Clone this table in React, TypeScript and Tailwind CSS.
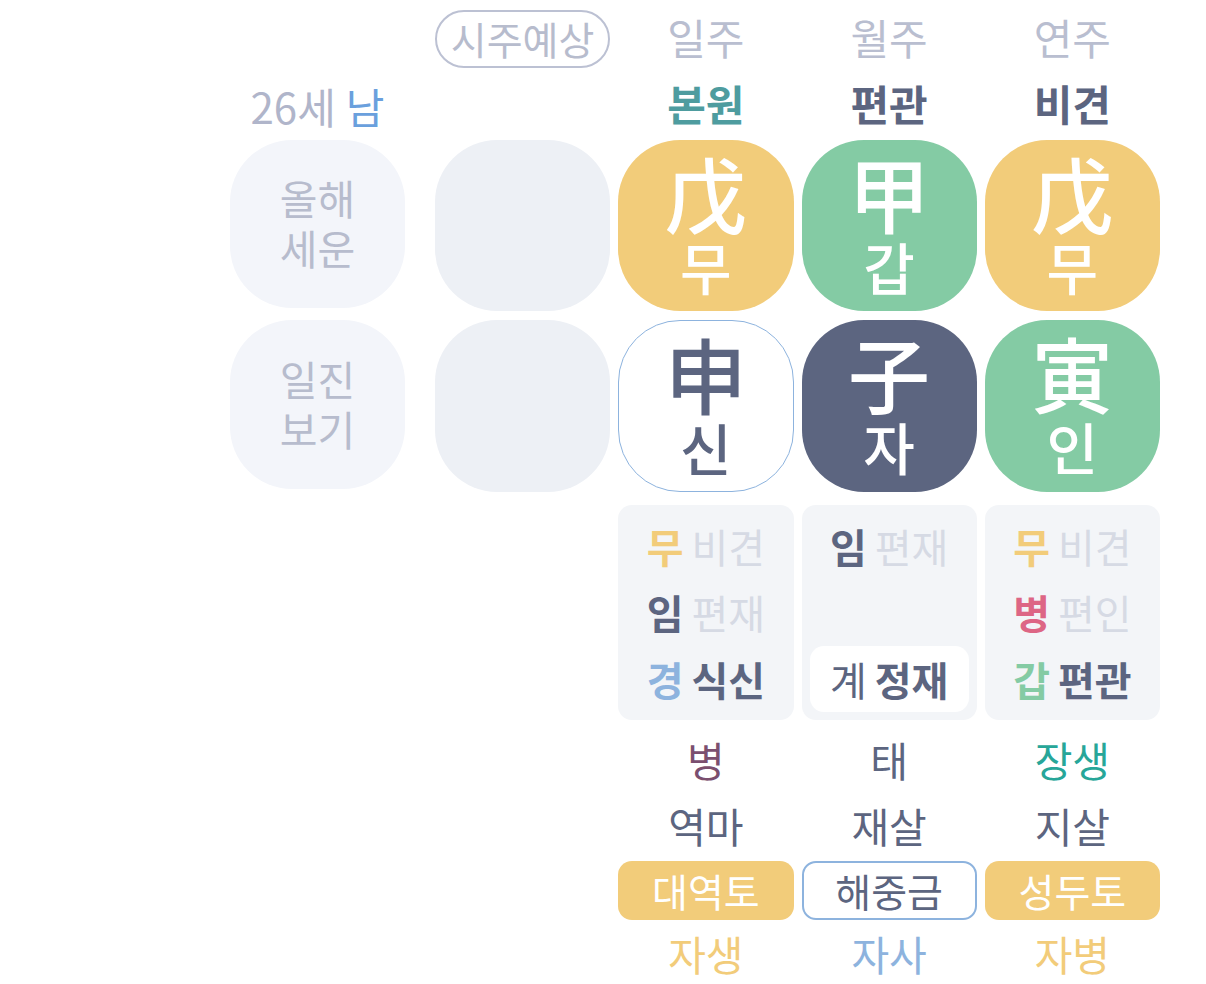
import React from 'react';

const FONT = "'Noto Sans CJK KR', 'Noto Sans', sans-serif";

const pillars = [
  { head: '일주', god: '본원', godClass: 'text-[#4e9c9f]' },
  { head: '월주', god: '편관', godClass: 'text-[#5c6580]' },
  { head: '연주', god: '비견', godClass: 'text-[#5c6580]' },
];

const stems = [
  { han: '戊', kor: '무', box: 'bg-[#f2cc7a] text-white' },
  { han: '甲', kor: '갑', box: 'bg-[#84cba4] text-white' },
  { han: '戊', kor: '무', box: 'bg-[#f2cc7a] text-white' },
];

const branches = [
  { han: '申', kor: '신', box: 'bg-white text-[#5c6580] border-[1.5px] border-[#8db3de]' },
  { han: '子', kor: '자', box: 'bg-[#5c6580] text-white' },
  { han: '寅', kor: '인', box: 'bg-[#84cba4] text-white' },
];

type Hidden = { stem: string; stemClass: string; god: string; strong?: boolean; pill?: boolean } | null;

const hidden: Hidden[][] = [
  [
    { stem: '무', stemClass: 'text-[#f2cc7a]', god: '비견' },
    { stem: '임', stemClass: 'text-[#5c6580]', god: '편재' },
    { stem: '경', stemClass: 'text-[#8db3de]', god: '식신', strong: true },
  ],
  [
    { stem: '임', stemClass: 'text-[#5c6580]', god: '편재' },
    null,
    { stem: '계', stemClass: 'text-[#5c6580] !font-normal', god: '정재', strong: true, pill: true },
  ],
  [
    { stem: '무', stemClass: 'text-[#f2cc7a]', god: '비견' },
    { stem: '병', stemClass: 'text-[#dd6685]', god: '편인' },
    { stem: '갑', stemClass: 'text-[#84cba4]', god: '편관', strong: true },
  ],
];

const unseong = [
  { text: '병', cls: 'text-[#7b4f6f]' },
  { text: '태', cls: 'text-[#5c6580]' },
  { text: '장생', cls: 'text-[#27a699]' },
];

const sinsal = ['역마', '재살', '지살'];

const napeum = [
  { text: '대역토', cls: 'bg-[#f2cc7a] text-white' },
  { text: '해중금', cls: 'bg-white text-[#5c6580] border-2 border-[#8db3de]' },
  { text: '성두토', cls: 'bg-[#f2cc7a] text-white' },
];

const bottom = [
  { text: '자생', cls: 'text-[#f2cc7a]' },
  { text: '자사', cls: 'text-[#8db3de]' },
  { text: '자병', cls: 'text-[#f2cc7a]' },
];

const Row = ({ label, children, className }: { label?: React.ReactNode; children: React.ReactNode; className: string }) => (
  <div className={`flex ${className}`}>
    <div className="w-[175px] mr-[30px] h-full flex-shrink-0">{label}</div>
    <div className="w-[725px] h-full grid grid-cols-4 grid-rows-1 gap-2">{children}</div>
  </div>
);

const GanjiCard = ({ han, kor, box }: { han: string; kor: string; box: string }) => (
  <div className={`h-full rounded-[62px] flex flex-col items-center pt-[12px] ${box}`}>
    <span className="text-[82px] leading-[80px] font-medium">{han}</span>
    <span className="text-[56px] leading-[56px] font-medium mt-[6px]">{kor}</span>
  </div>
);

export default function App() {
  return (
    <div className="min-h-screen bg-white pl-[230px] leading-none" style={{ fontFamily: FONT }}>
      {/* headers */}
      <Row className="h-[58px] mt-[10px]">
        <div className="h-full border-2 border-[#bcc1d3] rounded-full flex items-center justify-center text-[39px] text-[#b7bccd] pb-[2px]">
          시주예상
        </div>
        {pillars.map(p => (
          <div key={p.head} className="h-full flex items-center justify-center text-[42px] text-[#b9bed0] pb-[4px]">
            {p.head}
          </div>
        ))}
      </Row>

      {/* ten gods */}
      <Row
        className="h-[58px] mt-[8px]"
        label={
          <div className="h-full flex items-center justify-center text-[42px] pt-[2px]">
            <span className="text-[#b0b5ca]">26세</span>
            <span className="text-[#6aa0dd] ml-[10px]">남</span>
          </div>
        }
      >
        <div />
        {pillars.map(p => (
          <div key={p.head} className={`h-full flex items-center justify-center text-[42px] font-bold pb-[4px] ${p.godClass}`}>
            {p.god}
          </div>
        ))}
      </Row>

      {/* heavenly stems */}
      <Row
        className="h-[171px] mt-[6px]"
        label={
          <div className="h-[168px] rounded-[62px] bg-[#f3f5fa] flex flex-col items-center justify-center text-[41px] leading-[50px] text-[#b7bccd] pb-[4px]">
            <span>올해</span>
            <span>세운</span>
          </div>
        }
      >
        <div className="h-full rounded-[62px] bg-[#edf0f5]" />
        {stems.map((s, i) => (
          <GanjiCard key={i} {...s} />
        ))}
      </Row>

      {/* earthly branches */}
      <Row
        className="h-[172px] mt-[9px]"
        label={
          <div className="h-[169px] rounded-[62px] bg-[#f3f5fa] flex flex-col items-center justify-center text-[41px] leading-[50px] text-[#b7bccd] pb-[4px]">
            <span>일진</span>
            <span>보기</span>
          </div>
        }
      >
        <div className="h-full rounded-[62px] bg-[#edf0f5]" />
        {branches.map((b, i) => (
          <GanjiCard key={i} {...b} />
        ))}
      </Row>

      {/* hidden stems */}
      <Row className="h-[215px] mt-[13px]">
        <div />
        {hidden.map((col, i) => (
          <div key={i} className="h-full rounded-[14px] bg-[#f3f5f8] grid grid-rows-3 p-[8px]">
            {col.map((h, j) =>
              h ? (
                <div
                  key={j}
                  className={`flex items-center justify-center text-[40px] ${h.pill ? 'bg-white rounded-[14px]' : ''}`}
                >
                  <span className={`font-bold ${h.stemClass}`}>{h.stem}</span>
                  <span className={`ml-[8px] ${h.strong ? 'font-bold text-[#5c6580]' : 'text-[#d6dae4]'}`}>{h.god}</span>
                </div>
              ) : (
                <div key={j} />
              )
            )}
          </div>
        ))}
      </Row>

      {/* twelve stages */}
      <Row className="h-[56px] mt-[12px]">
        <div />
        {unseong.map(u => (
          <div key={u.text} className={`h-full flex items-center justify-center text-[41px] pb-[2px] ${u.cls}`}>
            {u.text}
          </div>
        ))}
      </Row>

      {/* sinsal */}
      <Row className="h-[56px] mt-[9px]">
        <div />
        {sinsal.map(s => (
          <div key={s} className="h-full flex items-center justify-center text-[41px] text-[#5c6580]">
            {s}
          </div>
        ))}
      </Row>

      {/* napeum */}
      <Row className="h-[59px] mt-[8px]">
        <div />
        {napeum.map(n => (
          <div key={n.text} className={`h-full rounded-[14px] flex items-center justify-center text-[39px] ${n.cls}`}>
            {n.text}
          </div>
        ))}
      </Row>

      {/* self stage */}
      <Row className="h-[56px] mt-[5px]">
        <div />
        {bottom.map(b => (
          <div key={b.text} className={`h-full flex items-center justify-center text-[41px] ${b.cls}`}>
            {b.text}
          </div>
        ))}
      </Row>
    </div>
  );
}
